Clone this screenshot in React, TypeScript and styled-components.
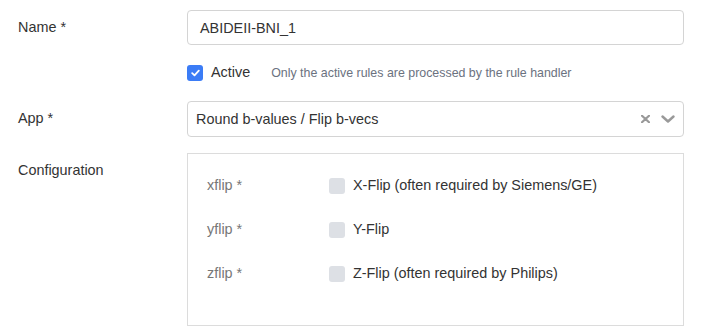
import React from "react";
import styled, { createGlobalStyle } from "styled-components";

const Global = createGlobalStyle`
  html, body { margin: 0; padding: 0; background: #fff; }
  body { font-family: "Liberation Sans", Arial, sans-serif; color: #333; }
`;

const Form = styled.div`
  display: grid;
  grid-template-columns: 169px 497px;
  padding: 10px 0 0 18px;
`;

const Label = styled.div<{ $top: number }>`
  font-size: 14.4px;
  color: #333;
  padding-top: ${(p) => p.$top}px;
  line-height: 16px;
`;

const Field = styled.div<{ $mb: number }>`
  margin-bottom: ${(p) => p.$mb}px;
`;

const TextInput = styled.div`
  box-sizing: border-box;
  height: 35px;
  border: 1px solid #d4d4d4;
  border-radius: 4px;
  padding: 0 12px;
  display: flex;
  align-items: center;
  font-size: 14.4px;
  color: #333;
`;

const ActiveRow = styled.div`
  display: flex;
  align-items: center;
  height: 16px;
  margin-top: 1px;
`;

const BlueBox = styled.span`
  width: 16px;
  height: 16px;
  border-radius: 3px;
  background: #3b7cf6;
  display: inline-flex;
  align-items: center;
  justify-content: center;
  margin-right: 8px;
`;

const ActiveText = styled.span`
  font-size: 14.4px;
  color: #333;
  margin-top: -3px;
  margin-right: 21px;
`;

const Help = styled.span`
  font-size: 12.4px;
  color: #6b7280;
`;

const Select = styled.div`
  box-sizing: border-box;
  height: 36px;
  border: 1px solid #d4d4d4;
  border-radius: 4px;
  padding: 0 8px;
  display: flex;
  align-items: center;
  font-size: 14.4px;
  color: #333;
`;

const SelectValue = styled.span`
  flex: 1;
`;

const Indicators = styled.span`
  display: flex;
  align-items: center;
  gap: 11px;
`;

const ConfigBox = styled.div`
  box-sizing: border-box;
  height: 173px;
  border: 1px solid #dcdcdc;
  padding: 24px 0 0 19px;
  display: flex;
  flex-direction: column;
  gap: 28px;
`;

const ConfigRow = styled.div`
  display: grid;
  grid-template-columns: 122px 16px auto;
  align-items: center;
  height: 16px;
`;

const SubLabel = styled.span`
  font-size: 14.4px;
  color: #777;
  margin-top: -3px;
`;

const GreyBox = styled.span`
  width: 16px;
  height: 16px;
  border-radius: 3px;
  background: #dde0e5;
`;

const OptText = styled.span`
  font-size: 14.4px;
  color: #333;
  margin-left: 8px;
  margin-top: -3px;
`;

const Check = () => (
  <svg width="9" height="8" viewBox="0 0 9 8">
    <path d="M1.2 4.2 L3.5 6.3 L7.8 1.6" fill="none" stroke="#fff" strokeWidth="1.8" strokeLinecap="round" strokeLinejoin="round" />
  </svg>
);

const ClearIcon = () => (
  <svg width="9" height="8" viewBox="0 0 9 8">
    <path d="M1 0.8 L8 7.2 M8 0.8 L1 7.2" stroke="#999" strokeWidth="2.2" strokeLinecap="round" />
  </svg>
);

const Chevron = () => (
  <svg width="14" height="8" viewBox="0 0 14 8">
    <path d="M1.5 1.5 L7 6.5 L12.5 1.5" fill="none" stroke="#999" strokeWidth="2.4" strokeLinecap="round" strokeLinejoin="round" />
  </svg>
);

const rows = [
  { key: "xflip *", text: "X-Flip (often required by Siemens/GE)" },
  { key: "yflip *", text: "Y-Flip" },
  { key: "zflip *", text: "Z-Flip (often required by Philips)" },
];

export default function App() {
  return (
    <>
      <Global />
      <Form>
        <Label $top={9}>Name *</Label>
        <Field $mb={19}>
          <TextInput>ABIDEII-BNI_1</TextInput>
        </Field>

        <div />
        <Field $mb={20}>
          <ActiveRow>
            <BlueBox>
              <Check />
            </BlueBox>
            <ActiveText>Active</ActiveText>
            <Help>Only the active rules are processed by the rule handler</Help>
          </ActiveRow>
        </Field>

        <Label $top={9}>App *</Label>
        <Field $mb={16}>
          <Select>
            <SelectValue>Round b-values / Flip b-vecs</SelectValue>
            <Indicators>
              <ClearIcon />
              <Chevron />
            </Indicators>
          </Select>
        </Field>

        <Label $top={9}>Configuration</Label>
        <Field $mb={0}>
          <ConfigBox>
            {rows.map((r) => (
              <ConfigRow key={r.key}>
                <SubLabel>{r.key}</SubLabel>
                <GreyBox />
                <OptText>{r.text}</OptText>
              </ConfigRow>
            ))}
          </ConfigBox>
        </Field>
      </Form>
    </>
  );
}
